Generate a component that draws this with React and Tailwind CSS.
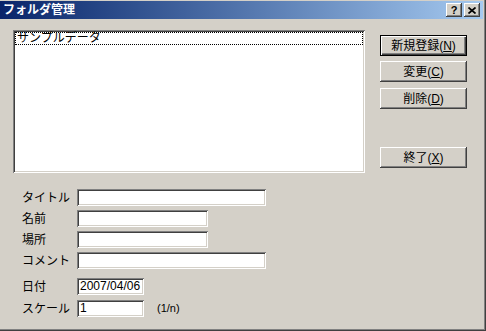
import React from 'react';

const sunken =
  'bg-white shadow-[inset_1px_1px_0_#808080,inset_-1px_-1px_0_#ffffff,inset_2px_2px_0_#404040,inset_-2px_-2px_0_#d4d0c8]';
const raised =
  'bg-[#d4d0c8] shadow-[inset_-1px_-1px_0_#404040,inset_1px_1px_0_#ffffff,inset_-2px_-2px_0_#808080,inset_2px_2px_0_#d4d0c8]';

const Btn = ({ label, keyChar, isDefault, className = '' }) => (
  <button
    className={`w-[87px] h-[21px] flex items-center justify-center text-[12px] leading-none text-black ${
      isDefault
        ? 'border border-black bg-[#d4d0c8] shadow-[inset_1px_1px_0_#ffffff,inset_-1px_-1px_0_#404040,inset_-2px_-2px_0_#808080]'
        : raised
    } ${className}`}
  >
    <span>
      {label}(<span className="underline">{keyChar}</span>)
    </span>
  </button>
);

const Field = ({ label, width, value, className = '', after }) => (
  <div className={`flex items-center h-[17px] pl-[22px] ${className}`}>
    <span className="w-[55px] text-[12px] leading-none whitespace-nowrap">{label}</span>
    <div className={`${sunken} h-[17px] pl-[3px] pt-[2px] text-[12px] leading-[13px] ${width}`}>{value}</div>
    {after}
  </div>
);

export default function App() {
  return (
    <div className="w-[486px] h-[331px] bg-[#d4d0c8] flex flex-col text-black font-['Liberation_Sans','Noto_Sans_CJK_JP',sans-serif] shadow-[inset_-1px_-1px_0_#404040,inset_-2px_-2px_0_#808080]">
      {/* title bar */}
      <div className="mt-[1px] mr-[3px] h-[18px] flex items-center bg-linear-to-r from-[#0a246a] to-[#a6caf0]">
        <span className="pl-[3px] text-white font-bold text-[12px] leading-none">フォルダ管理</span>
        <div className="ml-auto mr-[3px] flex gap-[2px]">
          <div className={`${raised} w-[16px] h-[14px] flex items-center justify-center text-[11px] font-bold leading-none`}>
            ?
          </div>
          <div className={`${raised} w-[16px] h-[14px] flex items-center justify-center`}>
            <svg width="8" height="7" viewBox="0 0 8 7">
              <path d="M0.5 0.5 L7.5 6.5 M7.5 0.5 L0.5 6.5" stroke="#000" strokeWidth="1.7" fill="none" />
            </svg>
          </div>
        </div>
      </div>

      {/* list + buttons */}
      <div className="flex pl-[13px] pt-[11px]">
        <div className={`${sunken} w-[352px] h-[143px] p-[2px]`}>
          <div className="h-[13px] border border-dotted border-black pl-[1px] text-[12px] leading-[11px] whitespace-nowrap">
            サンプルデータ
          </div>
        </div>
        <div className="ml-[15px] mt-[5px] flex flex-col">
          <Btn label="新規登録" keyChar="N" isDefault />
          <Btn label="変更" keyChar="C" className="mt-[5px]" />
          <Btn label="削除" keyChar="D" className="mt-[6px]" />
          <Btn label="終了" keyChar="X" className="mt-[38px]" />
        </div>
      </div>

      {/* form */}
      <div className="flex flex-col mt-[16px]">
        <Field label="タイトル" width="w-[189px]" />
        <Field label="名前" width="w-[131px]" className="mt-[4px]" />
        <Field label="場所" width="w-[131px]" className="mt-[4px]" />
        <Field label="コメント" width="w-[189px]" className="mt-[4px]" />
        <Field label="日付" width="w-[67px]" value="2007/04/06" className="mt-[9px]" />
        <Field
          label="スケール"
          width="w-[67px]"
          value="1"
          className="mt-[5px]"
          after={<span className="ml-[13px] text-[11px] leading-none">(1/n)</span>}
        />
      </div>
    </div>
  );
}
